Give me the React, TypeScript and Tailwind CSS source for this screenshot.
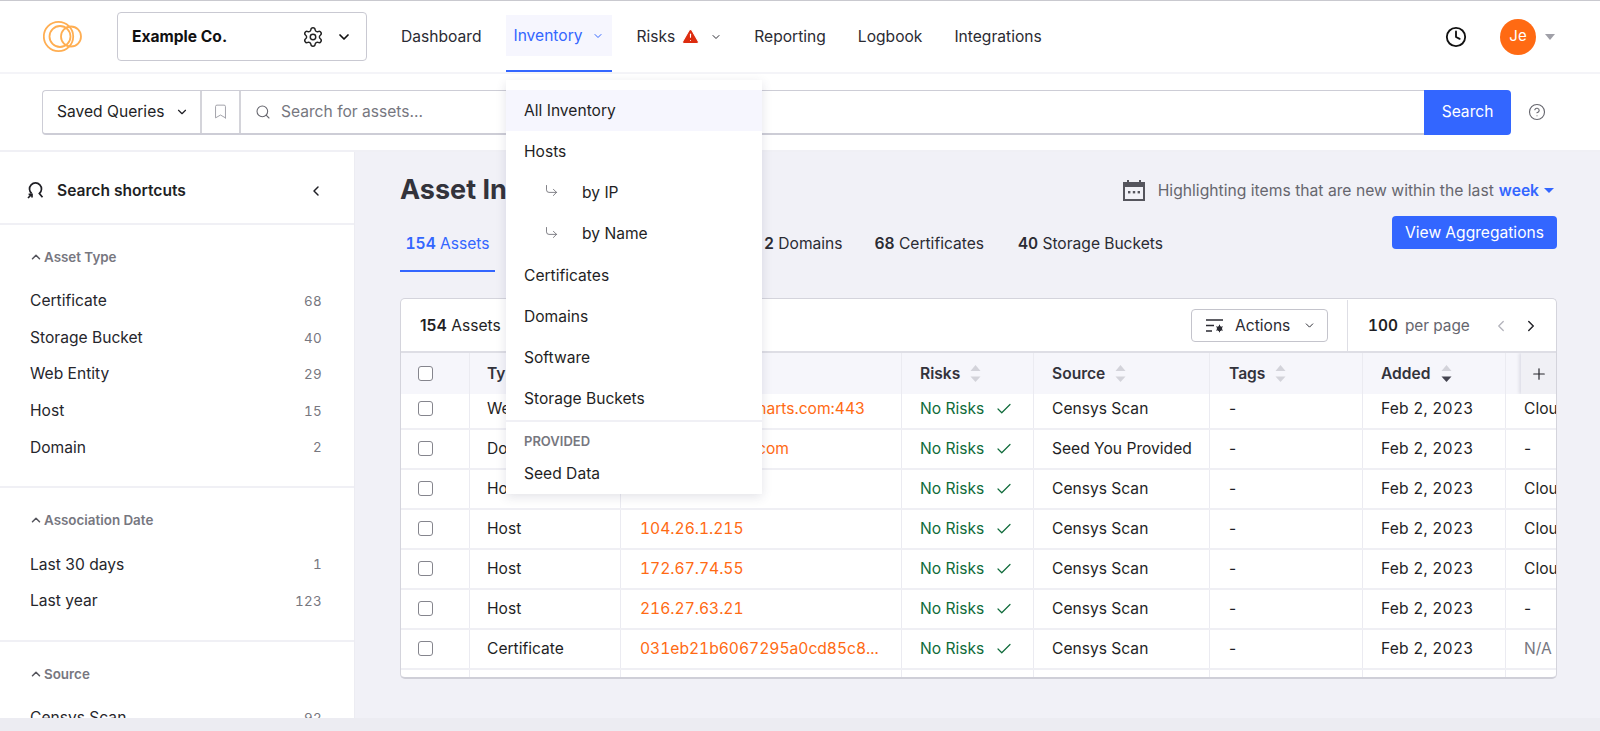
import React from "react";
import { Check, ChevronDown, ChevronLeft, ChevronRight, ChevronUp, Clock, Settings, Search, Bookmark, CircleHelp, CornerDownRight, Plus, TriangleAlert } from "lucide-react";

const font = { fontFamily: "Inter, 'Noto Sans', sans-serif" };

function Logo() {
  return (
    <svg width="39" height="33" viewBox="0 0 39 33" fill="none" stroke="#ffae52" strokeWidth="1.8">
      <circle cx="15.5" cy="16.5" r="14.7" />
      <circle cx="17" cy="16.5" r="10.5" />
      <circle cx="28" cy="16.5" r="10" />
    </svg>
  );
}

function Sort({ down }: { down?: boolean }) {
  return (
    <svg width="11" height="18" viewBox="0 0 11 18" className="ml-[10px]">
      <path d="M5.5 0L10.5 6H0.5Z" fill="#d3d3da" />
      <path d="M5.5 17L10.5 11.5H0.5Z" fill={down ? "#444450" : "#d3d3da"} />
    </svg>
  );
}

function Calendar() {
  return (
    <svg width="22" height="21" viewBox="0 0 22 21">
      <path d="M4 0h2v2h10V0h2v2h4v19H0V2h4Z" fill="#55555d" />
      <rect x="2" y="7" width="18" height="12" fill="#f1f1f7" />
      <rect x="5" y="11" width="2.4" height="2.4" fill="#55555d" />
      <rect x="9.8" y="11" width="2.4" height="2.4" fill="#55555d" />
      <rect x="14.6" y="11" width="2.4" height="2.4" fill="#55555d" />
    </svg>
  );
}

function Facet({ title, items, clip }: { title: string; items: [string, string][]; clip?: boolean }) {
  return (
    <div className={clip ? "pt-[22px]" : "pt-[22px] pb-[23px] border-b-2 border-[#f0f0f5]"}>
      <div className="flex items-center h-[20px] pl-[30px] text-[13.4px] font-semibold text-[#77777f]">
        <ChevronUp size={14} strokeWidth={2.6} className="text-[#55555d] mr-[1px] -ml-[1px]" />
        <span>{title}</span>
      </div>
      <div className="mt-[18px] flex flex-col gap-[4.6px]">
        {items.map(([a, b]) => (
          <div key={a} className="flex justify-between items-center h-[32px] pl-[30px] pr-[32px]">
            <span className="text-[15.6px] text-[#26262c]">{a}</span>
            <span className="text-[13.4px] tracking-[0.3px] tabular-nums text-[#77777f]">{b}</span>
          </div>
        ))}
      </div>
    </div>
  );
}

const cols = "grid grid-cols-[69px_151px_281px_132px_176px_153px_143px_50px]";
const rows: [string, string, string, string, string][] = [
  ["Web Entity", "www.examplesmarts.com:443", "Censys Scan", "Feb 2, 2023", "Cloudflare"],
  ["Domain", "www.examples.com", "Seed You Provided", "Feb 2, 2023", "-"],
  ["Host", "104.26.0.215", "Censys Scan", "Feb 2, 2023", "Cloudflare"],
  ["Host", "104.26.1.215", "Censys Scan", "Feb 2, 2023", "Cloudflare"],
  ["Host", "172.67.74.55", "Censys Scan", "Feb 2, 2023", "Cloudflare"],
  ["Host", "216.27.63.21", "Censys Scan", "Feb 2, 2023", "-"],
  ["Certificate", "031eb21b6067295a0cd85c8...", "Censys Scan", "Feb 2, 2023", "N/A"],
];

function Box() {
  return <div className="w-[15px] h-[15px] rounded-[3px] border border-[#85858d] bg-white" />;
}

function Menu() {
  const cls = "flex items-center h-[41.2px] pl-[18px] text-[15.6px] text-[#1f1f25]";
  return (
    <div className="absolute left-[506px] top-[80px] z-30 w-[256px] h-[414px] bg-white shadow-[0_3px_10px_rgba(60,60,90,0.14)] pt-[10px]">
      <div className={cls + " bg-[#f6f6fe]"}>All Inventory</div>
      <div className={cls}>Hosts</div>
      <div className={cls}>
        <CornerDownRight size={15} strokeWidth={1.3} className="ml-[20px] -mt-[4px] text-[#66666e]" />
        <span className="ml-[23px]">by IP</span>
      </div>
      <div className={cls}>
        <CornerDownRight size={15} strokeWidth={1.3} className="ml-[20px] -mt-[4px] text-[#66666e]" />
        <span className="ml-[23px]">by Name</span>
      </div>
      <div className={cls}>Certificates</div>
      <div className={cls}>Domains</div>
      <div className={cls}>Software</div>
      <div className={cls}>Storage Buckets</div>
      <div className="border-t-2 border-[#f0f0f5] pl-[18px] pt-[10px] text-[13px] leading-[18px] font-semibold text-[#77777f]">PROVIDED</div>
      <div className={cls + " mt-[4px]"}>Seed Data</div>
    </div>
  );
}

export default function App() {
  return (
    <div style={font} className="relative h-[731px] w-[1600px] overflow-hidden flex flex-col bg-[#f1f1f7] text-[#1f1f25]">
      <header className="h-[74px] shrink-0 bg-white border-t border-[#c9c9cf] border-b-2 border-b-[#f4f4f8] flex items-center pl-[43px] pr-[45px]">
        <Logo />
        <div className="ml-[35px] w-[250px] h-[49px] rounded-[4px] border border-[#c9c9d2] flex items-center pl-[14px] pr-[14px]">
          <span className="text-[15.6px] font-bold text-[#111] flex-1">Example Co.</span>
          <Settings size={22} strokeWidth={1.6} className="text-[#222]" />
          <ChevronDown size={16} strokeWidth={2.6} className="ml-[12px] text-[#111]" />
        </div>
        <nav className="ml-[34px] flex items-stretch h-[71px] text-[15.6px] text-[#2b2b33]">
          <div className="flex items-center">Dashboard</div>
          <div className="ml-[25px] w-[106px] flex flex-col">
            <div className="mt-[14px] h-[41px] bg-[#f6f6fe] flex items-center pl-[7px] text-[#3366ff]">
              Inventory
              <ChevronDown size={12} strokeWidth={2} className="ml-[9px]" />
            </div>
            <div className="mt-auto h-[2px] bg-[#3366ff]" />
          </div>
          <div className="ml-[24px] flex items-center">
            Risks
            <TriangleAlert size={19} fill="#dd2c0f" stroke="#ffffff" strokeWidth={1.4} className="ml-[6px]" />
            <ChevronDown size={12} strokeWidth={2} className="ml-[10px]" />
          </div>
          <div className="ml-[32px] flex items-center">Reporting</div>
          <div className="ml-[32px] flex items-center">Logbook</div>
          <div className="ml-[32px] flex items-center">Integrations</div>
        </nav>
        <div className="ml-auto flex items-center">
          <Clock size={22} strokeWidth={2} className="text-[#111]" />
          <div className="ml-[33px] w-[36px] h-[36px] rounded-full bg-[#ff6a13] text-white text-[15px] flex items-center justify-center">Je</div>
          <div className="ml-[9px] w-0 h-0 border-l-[5px] border-r-[5px] border-t-[6px] border-l-transparent border-r-transparent border-t-[#a0a0a8]" />
        </div>
      </header>

      <div className="h-[78px] shrink-0 bg-white border-b-2 border-[#f0f0f5] flex items-center pl-[42px] pr-[54px]">
        <div className="flex-1 h-[45px] flex">
          <div className="flex flex-1 rounded-l-[4px] border border-r-0 border-b-2 border-[#cdcdd6]">
            <div className="w-[159px] flex items-center pl-[14px] text-[15.6px] text-[#1f1f25] border-r-2 border-[#d4d4da]">
              Saved Queries
              <ChevronDown size={14} strokeWidth={2} className="ml-[11px]" />
            </div>
            <div className="w-[39px] flex items-center justify-center border-r-2 border-[#d4d4da]">
              <Bookmark size={17} strokeWidth={1.3} className="text-[#9c9ca4]" />
            </div>
            <div className="flex-1 flex items-center pl-[14px] text-[15.6px] text-[#77777f]">
              <Search size={16} strokeWidth={1.6} className="text-[#66666e]" />
              <span className="ml-[10px]">Search for assets...</span>
            </div>
          </div>
          <div className="w-[87px] rounded-r-[4px] bg-[#3366ff] text-white text-[15.6px] flex items-center justify-center">Search</div>
        </div>
        <CircleHelp size={18} strokeWidth={1.5} className="ml-[17px] text-[#66666e]" />
      </div>

      <div className="flex-1 flex min-h-0">
        <aside className="w-[355px] shrink-0 overflow-hidden bg-white border-r border-[#ececf2]">
          <div className="h-[73px] border-b-2 border-[#f0f0f5] flex items-center pl-[27px] pr-[30px] pt-[6px]">
            <svg width="17" height="17" viewBox="0 0 17 17" fill="none" stroke="#1f1f25" strokeWidth="1.7">
              <path d="M4.6 11.5A6 6 0 1 1 12.4 11.5L15.5 15.2" />
              <path d="M1 16L5 12M1.6 12.4H5V15.6" />
            </svg>
            <span className="ml-[13px] text-[15.6px] font-semibold text-[#1f1f25] flex-1">Search shortcuts</span>
            <ChevronLeft size={16} strokeWidth={2.2} className="text-[#1f1f25]" />
          </div>
          <Facet title="Asset Type" items={[["Certificate", "68"], ["Storage Bucket", "40"], ["Web Entity", "29"], ["Host", "15"], ["Domain", "2"]]} />
          <Facet title="Association Date" items={[["Last 30 days", "1"], ["Last year", "123"]]} />
          <Facet title="Source" clip items={[["Censys Scan", "92"]]} />
        </aside>

        <main className="flex-1 min-w-0 pl-[45px] pr-[43px]">
          <div className="h-[80px] flex items-start justify-between">
            <h1 className="mt-[19px] text-[27px] leading-[38px] font-bold text-[#33333b]">Asset Inventory</h1>
            <div className="mt-[27px] flex items-center text-[15.6px] text-[#66666e]">
              <Calendar />
              <span className="ml-[13px] text-[15.7px]">Highlighting items that are new within the last</span>
              <span className="ml-[5px] font-semibold text-[#3366ff]">week</span>
              <div className="ml-[5px] mr-[3px] w-0 h-0 border-l-[5px] border-r-[5px] border-t-[5px] border-l-transparent border-r-transparent border-t-[#3366ff]" />
            </div>
          </div>
          <div className="h-[66px] flex items-start text-[15.6px] text-[#2b2b33] tabular-nums">
            <div className="w-[95px] h-[40px] border-b-2 border-[#3366ff] flex items-start justify-center text-[#3366ff]">
              <span><b className="font-semibold">154</b> Assets</span>
            </div>
            <div className="ml-[269px]"><b className="font-semibold">2</b> Domains</div>
            <div className="ml-[32px]"><b className="font-semibold">68</b> Certificates</div>
            <div className="ml-[34px]"><b className="font-semibold">40</b> Storage Buckets</div>
            <div className="ml-auto -mt-[16px] w-[165px] h-[33px] rounded-[4px] bg-[#3366ff] text-white text-[15.6px] flex items-center justify-center">View Aggregations</div>
          </div>

          <div className="h-[381px] rounded-[5px] bg-white border border-[#d4d4dc] border-b-2 border-b-[#cfcfd8] overflow-hidden">
            <div className="h-[54px] flex items-center border-b-2 border-[#dedee5] pt-[1px]">
              <div className="pl-[19px] text-[15.6px]"><b className="font-semibold">154</b> Assets</div>
              <div className="ml-auto w-[137px] h-[33px] rounded-[4px] border border-[#c4c4cc] flex items-center pl-[14px] text-[15.6px] text-[#2b2b33]">
                <svg width="18" height="14" viewBox="0 0 18 14" fill="none" stroke="#2b2b33" strokeWidth="1.3">
                  <path d="M0 1H17M0 6.5H8M0 12H6" />
                  <circle cx="13.5" cy="9.5" r="2.6" fill="#2b2b33" stroke="none" />
                  <path d="M13.5 5.8v7.4M10.3 7.6l6.4 3.8M10.3 11.4l6.4-3.8" strokeWidth="1.1" />
                </svg>
                <span className="ml-[11px]">Actions</span>
                <ChevronDown size={13} strokeWidth={1.8} className="ml-[13px]" />
              </div>
              <div className="ml-[19px] h-full w-[209px] border-l border-[#dedee5] flex items-center pl-[20px] text-[15.4px] tabular-nums">
                <b className="font-semibold">100</b>
                <span className="ml-[7px] text-[#66666e]">per page</span>
                <ChevronLeft size={18} strokeWidth={1.8} className="ml-[22px] text-[#b5b5bd]" />
                <ChevronRight size={18} strokeWidth={2} className="ml-[12px] text-[#26262c]" />
              </div>
            </div>
            <div className={cols + " relative z-10 h-[41px] bg-[#f6f6fb] text-[15.6px] font-semibold text-[#33333b]"}>
              <div className="border-r border-[#ebebf1] flex items-center pl-[17px]"><Box /></div>
              <div className="border-r border-[#ebebf1] flex items-center pl-[17px]">Type<Sort /></div>
              <div className="border-r border-[#ebebf1] flex items-center pl-[21px]">Name<Sort /></div>
              <div className="border-r border-[#ebebf1] flex items-center pl-[18px]">Risks<Sort /></div>
              <div className="border-r border-[#ebebf1] flex items-center pl-[18px]">Source<Sort /></div>
              <div className="border-r border-[#ebebf1] flex items-center pl-[19px]">Tags<Sort /></div>
              <div className="border-r border-[#ebebf1] flex items-center pl-[18px]">Added<Sort down /></div>
              <div className="relative overflow-hidden">
                <div className="ml-[15px] h-full bg-[#f0f0f5] shadow-[-2px_0_3px_rgba(60,60,90,0.12)] flex items-center justify-center text-[#26262c]">
                  <Plus size={18} strokeWidth={1.6} />
                </div>
              </div>
            </div>
            <div className="-mt-[4px]">
              {rows.concat([["", "", "", "", ""]]).map((r, i) => (
                <div key={i} className={cols + " h-[40px] border-b-2 border-[#efeff4] text-[15.6px] text-[#1f1f25]"}>
                  <div className="border-r border-[#ebebf1] flex items-center pl-[17px]">{r[0] && <div className="-mt-[2px]"><Box /></div>}</div>
                  <div className="border-r border-[#ebebf1] flex items-center pl-[17px]">{r[0]}</div>
                  <div className="border-r border-[#ebebf1] flex items-center pl-[19px] text-[#ff6a13] tabular-nums whitespace-nowrap overflow-hidden">{r[1]}</div>
                  <div className="border-r border-[#ebebf1] flex items-center pl-[18px] text-[#0f6b3a]">
                    {r[0] && <>No Risks<Check size={18} strokeWidth={1.6} className="ml-[11px]" /></>}
                  </div>
                  <div className="border-r border-[#ebebf1] flex items-center pl-[18px] whitespace-nowrap">{r[2]}</div>
                  <div className="border-r border-[#ebebf1] flex items-center pl-[19px]">{r[0] && "-"}</div>
                  <div className="border-r border-[#ebebf1] flex items-center pl-[18px] tabular-nums tracking-[0.2px]">{r[3]}</div>
                  <div className={"flex items-center pl-[18px] whitespace-nowrap" + (r[4] === "N/A" ? " text-[#77777f]" : "")}>{r[4]}</div>
                </div>
              ))}
            </div>
          </div>
        </main>
      </div>
      <div className="h-[13px] shrink-0 bg-[#ececf2]" />
      <Menu />
    </div>
  );
}
